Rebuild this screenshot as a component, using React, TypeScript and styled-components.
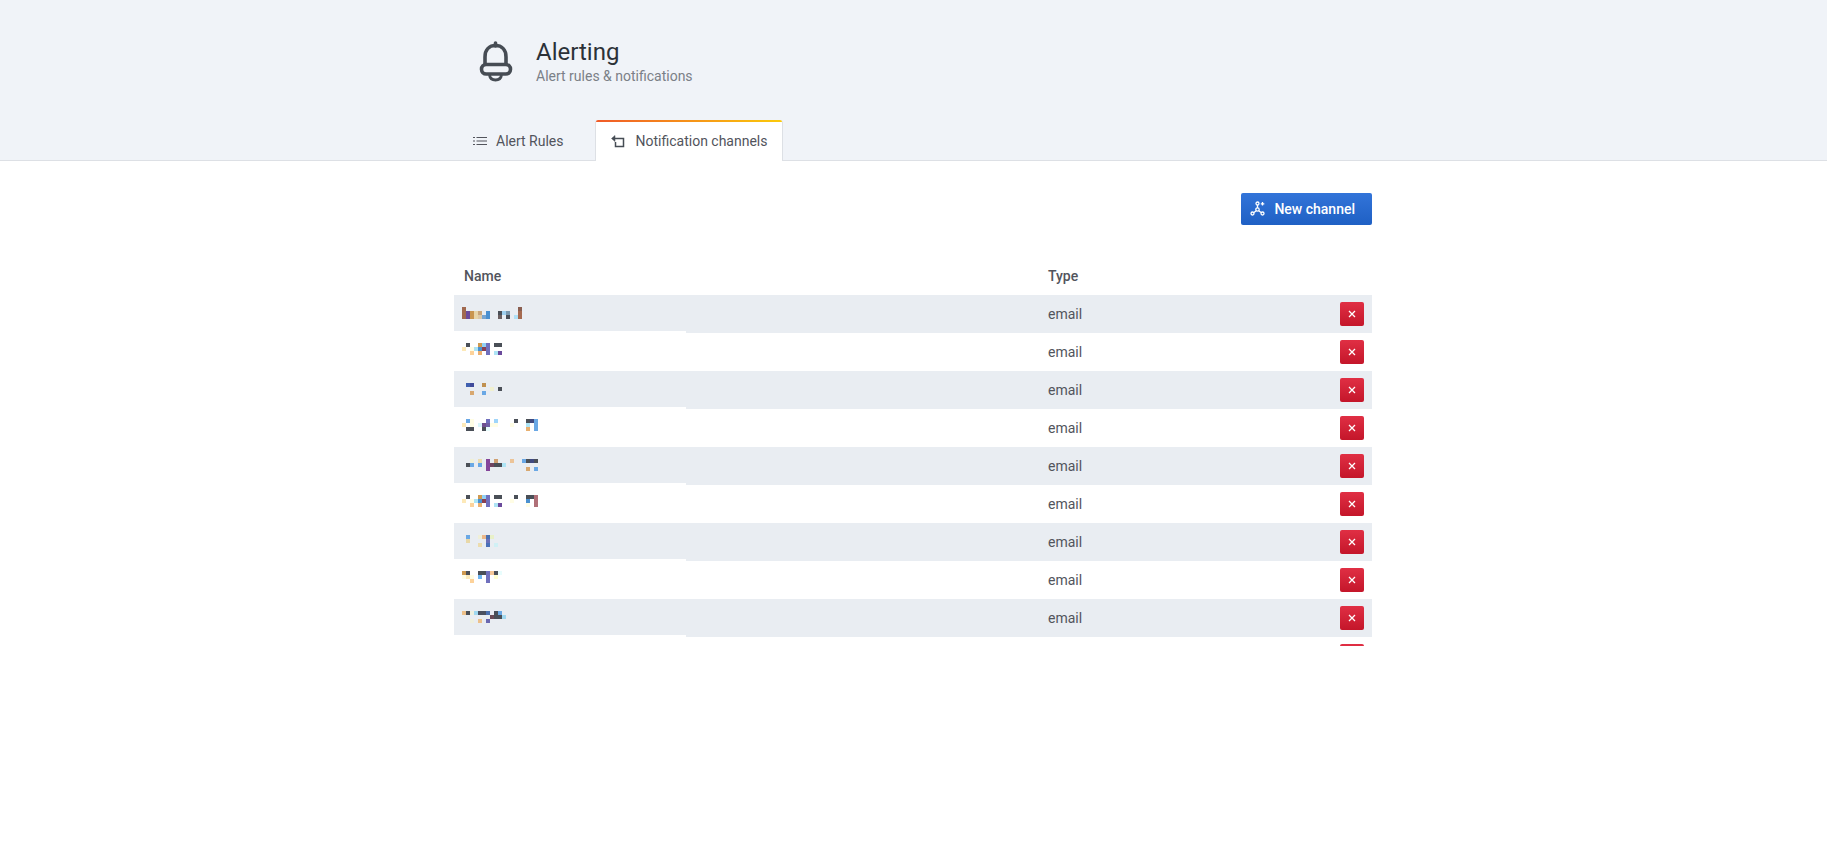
import React from 'react'
import styled, { createGlobalStyle } from 'styled-components'

const GlobalStyle = createGlobalStyle`
  html, body {
    margin: 0;
    background: #fff;
    font-family: Roboto, 'Liberation Sans', sans-serif;
    font-size: 14px;
    color: #52545c;
  }
`

const Header = styled.header`
  height: 160px;
  background: #f0f3f8;
  border-bottom: 1px solid #dde0e5;
`

const Inner = styled.div`
  width: 918px;
  margin-left: 454px;
`

const HeaderInner = styled(Inner)`
  height: 100%;
  display: flex;
  flex-direction: column;
  justify-content: space-between;
`

const Brand = styled.div`
  display: flex;
  align-items: center;
  gap: 23px;
  padding: 38px 0 0 25px;
`

const Title = styled.h1`
  margin: 0;
  font-size: 24px;
  line-height: 28px;
  font-weight: 400;
  color: #2c3138;
`

const Subtitle = styled.div`
  margin-top: 2px;
  font-size: 14px;
  line-height: 17px;
  color: #7b8087;
`

const Tabs = styled.nav`
  display: flex;
  height: 41px;
  margin-bottom: -1px;
`

const Tab = styled.a<{ $active?: boolean }>`
  display: flex;
  align-items: center;
  gap: 9px;
  box-sizing: border-box;
  color: #52545c;
  position: relative;
  ${p =>
    p.$active
      ? `
    gap: 11px;
    padding: 0 14px 0 15px;
    background: #fff;
    border: 1px solid #dde0e5;
    border-top: 0;
    border-bottom: 0;
    border-radius: 3px 3px 0 0;
    margin-left: 12px;
    &::before {
      content: '';
      position: absolute;
      left: 0;
      right: 0;
      top: 0;
      height: 2px;
      border-radius: 3px 3px 0 0;
      background: linear-gradient(to right, #f05a28, #fbca0a);
    }
  `
      : `
    padding: 0 19px;
  `}
`

const Toolbar = styled.div`
  display: flex;
  justify-content: flex-end;
  padding: 32px 0;
`

const PrimaryButton = styled.button`
  display: flex;
  align-items: center;
  gap: 8px;
  height: 32px;
  padding: 0 17px 0 9px;
  border: 0;
  border-radius: 2px;
  background: linear-gradient(to bottom, #3274d9, #1f60c4);
  color: #fff;
  font: 500 14px Roboto, 'Liberation Sans', sans-serif;
`

const TableClip = styled.div`
  height: 389px;
  overflow: hidden;
`

const Table = styled.div`
  display: flex;
  flex-direction: column;
`

const HeadRow = styled.div`
  display: grid;
  grid-template-columns: 594px 1fr;
  height: 38px;
  align-items: center;
  font-weight: 500;
  color: #52545c;
`

const HeadCell = styled.div<{ $first?: boolean }>`
  padding-left: ${p => (p.$first ? '10px' : '0')};
`

const Row = styled.div<{ $striped: boolean }>`
  display: grid;
  grid-template-columns: 594px 1fr auto;
  height: 38px;
  align-items: center;
  padding-right: 8px;
  background: ${p => (p.$striped ? '#e9edf2' : '#fff')};
  position: relative;

  /* the blur patch over the name column stops short of the row */
  &::after {
    content: '';
    position: absolute;
    left: 0;
    bottom: 0;
    width: 232px;
    height: 2px;
    background: #fff;
  }
`

const NameCell = styled.div`
  height: 38px;
`

const DeleteButton = styled.button`
  width: 24px;
  height: 24px;
  padding: 0;
  display: flex;
  align-items: center;
  justify-content: center;
  border: 0;
  border-radius: 2px;
  background: linear-gradient(to bottom, #e02f44, #c4162a);
`

const BellIcon = () => (
  <svg width="34" height="42" viewBox="0 1 34 42" fill="none" stroke="#464c54" strokeWidth="3.600">
    <path d="M16.500 3v3" strokeLinecap="round" />
    <path d="M6 25v-8C6 9.500 10.500 5.500 16.500 5.500S27 9.500 27 17v8" />
    <rect x="2.500" y="24.500" width="29" height="9.500" rx="4.700" />
    <path d="M10.500 35C11 38.500 13.500 40 16.500 40S22 38.500 22.500 35" strokeWidth="2.800" />
  </svg>
)

const ListIcon = () => (
  <svg width="14" height="14" viewBox="0 0 14 14" fill="none" stroke="#52545c" strokeWidth="1.200">
    <path d="M0 3.500h2M0 7h2M0 10.500h2M3.500 3.500H14M3.500 7H14M3.500 10.500H14" />
  </svg>
)

const ChannelIcon = () => (
  <svg width="14" height="14" viewBox="0 0 14 14" fill="none" stroke="#464c54" strokeWidth="1.500">
    <path d="M3.500 4.500h9v8H4.500V8" />
    <path d="M0.500 4.500 4 1.500v6z" fill="#464c54" strokeWidth="0.500" />
  </svg>
)

const NodesIcon = () => (
  <svg width="16" height="16" viewBox="0 0 16 16" fill="none" stroke="#fff" strokeWidth="1.300">
    <circle cx="7.500" cy="2.500" r="1.500" />
    <circle cx="2.500" cy="12.500" r="1.500" />
    <circle cx="12.500" cy="12.500" r="1.500" />
    <circle cx="7.500" cy="8.500" r="1.700" />
    <path d="M7.500 4v3M4 11.500l2.200-1.800M11 11.500 8.800 9.700" />
    <path d="M12.500 1v3.500M10.800 2.800h3.500" />
  </svg>
)

const TimesIcon = () => (
  <svg width="8" height="8" viewBox="0 0 8 8" stroke="#fff" strokeWidth="1.300">
    <path d="M1 1l6 6M7 1L1 7" />
  </svg>
)

type Cell = [number, number, string]

const dk = '#4a4f57'

// blurred-out channel names: column, row, colour on a 4px grid
const channels: { top: number; type: string; cells: Cell[] }[] = [
  {
    top: 12,
    type: 'email',
    cells: [
      [0, 0, '#a0694f'], [0, 1, '#a0694f'], [0, 2, '#a0694f'],
      [1, 1, '#6a4a9c'], [1, 2, '#6a4a9c'], [2, 1, '#c9954f'], [2, 2, '#c9954f'],
      [3, 1, '#e8d5a8'], [3, 2, '#e8d5a8'], [4, 1, '#c9a57a'], [4, 2, '#dcc8a8'],
      [5, 2, '#78a5d0'], [6, 1, '#4a90d0'], [6, 2, '#4a90d0'],
      [9, 1, dk], [9, 2, '#6a5f60'], [10, 1, '#9fd0ef'], [11, 1, '#7a98ae'], [11, 2, dk],
      [13, 2, '#b0e0f5'], [14, 0, '#8a5f50'], [14, 1, '#a56a50'], [14, 2, '#a56a50'],
    ],
  },
  {
    top: 10,
    type: 'email',
    cells: [
      [0, 1, '#fde9b8'], [1, 0, dk], [2, 1, '#fffde5'], [2, 2, '#fdd29a'], [3, 1, '#ade4f5'],
      [4, 0, '#cf9a50'], [4, 1, '#4a90d0'], [4, 2, '#ecb070'], [5, 0, '#90d0f5'], [5, 1, '#8a4050'],
      [6, 0, '#7070bd'], [6, 1, '#7070bd'], [6, 2, '#7070bd'],
      [8, 0, dk], [8, 2, '#ade4f5'], [9, 0, dk], [9, 2, '#6a4a9c'],
    ],
  },
  {
    top: 12,
    type: 'email',
    cells: [
      [1, 0, '#4060b0'], [2, 0, '#404a9a'], [5, 0, '#c09050'], [7, 1, '#f0f0d0'], [9, 1, dk],
      [2, 2, '#d8a870'], [5, 2, '#6aa8e5'],
    ],
  },
  {
    top: 10,
    type: 'email',
    cells: [
      [0, 1, '#fde9b8'], [1, 0, '#6aa8e5'], [1, 2, dk], [2, 0, '#fffde5'], [2, 1, '#fffde5'], [2, 2, dk],
      [4, 1, '#d8f5fa'], [5, 1, '#6f4f90'], [5, 2, dk], [6, 0, '#7070bd'], [6, 1, '#6f60a5'], [6, 2, '#e8fdfd'],
      [7, 1, '#fffde5'], [8, 0, '#9fd5fa'], [8, 1, '#fffde5'], [12, 1, '#fffde5'], [13, 0, dk],
      [16, 0, dk], [16, 1, '#ade4f5'], [16, 2, '#e8b070'], [17, 0, '#404a80'],
      [18, 0, '#6aa8e5'], [18, 1, '#6aa8e5'], [18, 2, '#6aa8e5'],
    ],
  },
  {
    top: 12,
    type: 'email',
    cells: [
      [2, 0, '#f0f0d8'], [2, 1, '#6aa8e5'], [1, 1, dk], [4, 0, '#ecdcae'], [4, 1, '#6aa8e5'],
      [6, 0, '#84459a'], [6, 1, '#84459a'], [6, 2, '#84459a'], [7, 1, '#6f4560'], [8, 0, '#d0a070'], [8, 1, dk],
      [9, 1, dk], [10, 1, '#ade4f5'], [12, 0, '#ecc498'], [15, 0, '#6aa8e5'], [16, 0, dk], [16, 2, '#d8a870'],
      [17, 0, '#404a80'], [18, 0, dk], [18, 2, '#6aa8e5'],
    ],
  },
  {
    top: 10,
    type: 'email',
    cells: [
      [0, 1, '#fde9b8'], [1, 0, dk], [2, 1, '#fffde5'], [2, 2, '#fdd29a'], [3, 1, '#ade4f5'],
      [4, 0, '#cf9a50'], [4, 1, '#4a90d0'], [4, 2, '#ecb070'], [5, 0, '#90d0f5'], [5, 1, '#8a4050'],
      [6, 0, '#7070bd'], [6, 1, '#7070bd'], [6, 2, '#7070bd'],
      [8, 0, dk], [8, 2, '#ade4f5'], [9, 0, dk], [9, 2, '#6a4a9c'], [12, 1, '#fffde5'], [13, 0, dk],
      [16, 0, dk], [16, 1, '#4a90d0'], [16, 2, '#fffde5'], [17, 0, dk],
      [18, 0, '#b07078'], [18, 1, '#b07078'], [18, 2, '#b07078'],
    ],
  },
  {
    top: 12,
    type: 'email',
    cells: [
      [1, 0, '#6aa8e5'], [1, 1, '#e8d8a8'], [4, 0, '#f0f0d8'], [4, 2, '#ecdcae'], [5, 0, '#ecb88a'],
      [6, 0, '#4a70b0'], [6, 1, '#6a70b8'], [6, 2, '#4a70b8'], [7, 0, '#e8f0c8'], [8, 2, '#d0f0f5'],
    ],
  },
  {
    top: 10,
    type: 'email',
    cells: [
      [0, 0, '#cf9a50'], [0, 1, '#fffde5'], [1, 0, dk], [1, 1, '#fde9b8'], [2, 1, '#fffde5'], [2, 2, '#fdd29a'],
      [4, 0, dk], [4, 1, '#6fb5f0'], [5, 0, dk], [6, 0, '#7070bd'], [6, 1, '#7070bd'], [6, 2, '#7070bd'],
      [7, 0, '#f5c898'], [8, 0, dk], [8, 1, '#ffffd0'], [9, 0, '#e8fdfd'],
    ],
  },
  {
    top: 12,
    type: 'email',
    cells: [
      [0, 0, '#ecc08a'], [1, 0, dk], [2, 0, '#eef0e0'], [2, 2, '#eef0e0'], [3, 0, '#a0d8f0'],
      [4, 0, '#4a5060'], [4, 2, '#ecc08a'], [5, 0, '#4a5060'], [6, 0, '#4a70b0'], [6, 2, '#6a68b0'],
      [7, 1, '#6a4a55'], [8, 0, dk], [8, 1, dk], [9, 0, '#6aa8e5'], [9, 1, dk], [10, 1, '#a0d8f0'],
    ],
  },
  // only the top of this row's button shows above the clip
  { top: 10, type: '', cells: [] },
]

const BlurredName = ({ cells, top }: { cells: Cell[]; top: number }) => (
  <svg width="100" height="38" shapeRendering="crispEdges" style={{ display: 'block' }}>
    {cells.map(([c, r, fill]) => (
      <rect key={`${c}-${r}`} x={8 + c * 4} y={top + r * 4} width="4" height="4" fill={fill} />
    ))}
  </svg>
)

export default function App() {
  return (
    <>
      <GlobalStyle />
      <Header>
        <HeaderInner>
          <Brand>
            <BellIcon />
            <div>
              <Title>Alerting</Title>
              <Subtitle>Alert rules &amp; notifications</Subtitle>
            </div>
          </Brand>
          <Tabs>
            <Tab>
              <ListIcon />
              Alert Rules
            </Tab>
            <Tab $active>
              <ChannelIcon />
              Notification channels
            </Tab>
          </Tabs>
        </HeaderInner>
      </Header>
      <Inner>
        <Toolbar>
          <PrimaryButton>
            <NodesIcon />
            New channel
          </PrimaryButton>
        </Toolbar>
        <TableClip>
          <Table>
            <HeadRow>
              <HeadCell $first>Name</HeadCell>
              <HeadCell>Type</HeadCell>
            </HeadRow>
            {channels.map((ch, i) => (
              <Row key={i} $striped={i % 2 === 0}>
                <NameCell>
                  <BlurredName cells={ch.cells} top={ch.top} />
                </NameCell>
                <span>{ch.type}</span>
                <DeleteButton>
                  <TimesIcon />
                </DeleteButton>
              </Row>
            ))}
          </Table>
        </TableClip>
      </Inner>
    </>
  )
}
